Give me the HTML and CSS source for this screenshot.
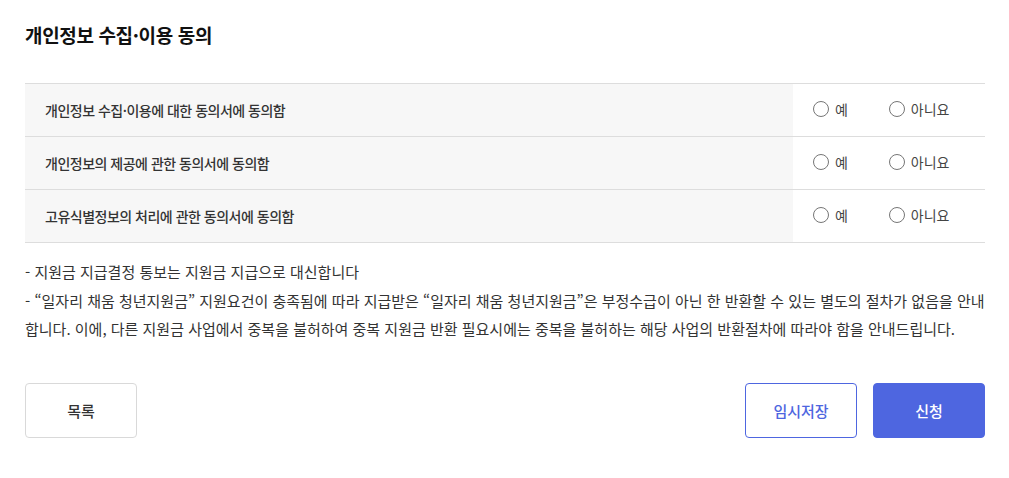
FILE: index.html
```html
<!DOCTYPE html>
<html lang="ko">
<head>
    <meta charset="UTF-8">
    <title>개인정보 수집·이용 동의</title>
    <link rel="stylesheet" href="styles.css">
</head>
<body>
    <div class="wrap">
        <h2 class="title">개인정보 수집·이용 동의</h2>

        <table class="agree">
            <tr>
                <th>개인정보 수집·이용에 대한 동의서에 동의함</th>
                <td>
                    <label class="radio"><input type="radio" name="a1"><span class="dot"></span>예</label>
                    <label class="radio"><input type="radio" name="a1"><span class="dot"></span>아니요</label>
                </td>
            </tr>
            <tr>
                <th>개인정보의 제공에 관한 동의서에 동의함</th>
                <td>
                    <label class="radio"><input type="radio" name="a2"><span class="dot"></span>예</label>
                    <label class="radio"><input type="radio" name="a2"><span class="dot"></span>아니요</label>
                </td>
            </tr>
            <tr>
                <th>고유식별정보의 처리에 관한 동의서에 동의함</th>
                <td>
                    <label class="radio"><input type="radio" name="a3"><span class="dot"></span>예</label>
                    <label class="radio"><input type="radio" name="a3"><span class="dot"></span>아니요</label>
                </td>
            </tr>
        </table>

        <ul class="notes">
            <li>- 지원금 지급결정 통보는 지원금 지급으로 대신합니다</li>
            <li>- “일자리 채움 청년지원금” 지원요건이 충족됨에 따라 지급받은 “일자리 채움 청년지원금”은 부정수급이 아닌 한 반환할 수 있는 별도의 절차가 없음을 안내합니다. 이에, 다른 지원금 사업에서 중복을 불허하여 중복 지원금 반환 필요시에는 중복을 불허하는 해당 사업의 반환절차에 따라야 함을 안내드립니다.</li>
        </ul>

        <div class="btns">
            <button type="button" class="btn">목록</button>
            <div class="right">
                <button type="button" class="btn line">임시저장</button>
                <button type="button" class="btn fill">신청</button>
            </div>
        </div>
    </div>
</body>
</html>
```

FILE: styles.css
```css
/* General Styling */
* {
    box-sizing: border-box;
}

body {
    margin: 0;
    background: #ffffff;
    color: #222222;
    font-family: "Noto Sans CJK KR", "Noto Sans", sans-serif;
}

.wrap {
    width: 960px;
    margin: 0 0 0 25px;
    padding-top: 22px;
}

.title {
    margin: 0 0 35px;
    font-size: 19px;
    font-weight: 700;
    line-height: 26px;
    letter-spacing: -0.35px;
    color: #111111;
}

/* agree table */
.agree {
    width: 100%;
    border-collapse: collapse;
    border-top: 1px solid #dddddd;
}

.agree tr {
    border-bottom: 1px solid #dddddd;
}

.agree th {
    height: 53px;
    padding: 0 20px;
    background: #f7f7f7;
    text-align: left;
    font-size: 14px;
    font-weight: 500;
    color: #333333;
    letter-spacing: -0.5px;
}

.agree td {
    width: 192px;
    padding: 0 0 0 20px;
    font-size: 14px;
    color: #444444;
}

.radio {
    display: inline-flex;
    align-items: center;
    gap: 6px;
    margin-right: 37px;
    cursor: pointer;
}

.radio:last-child {
    margin-right: 0;
}

.radio input {
    display: none;
}

.dot {
    width: 16px;
    height: 16px;
    border: 1px solid #767676;
    border-radius: 50%;
}

/* notes */
.notes {
    list-style: none;
    margin: 15px 0 0;
    padding: 0;
    font-size: 15px;
    line-height: 28.5px;
    color: #333333;
}

/* buttons */
.btns {
    display: flex;
    justify-content: space-between;
    margin-top: 39px;
}

.right {
    display: flex;
    gap: 16px;
}

.btn {
    width: 112px;
    height: 55px;
    border: 1px solid #d9d9d9;
    border-radius: 4px;
    background: #ffffff;
    font-family: inherit;
    font-size: 15px;
    font-weight: 500;
    color: #333333;
    cursor: pointer;
}

.btn.line {
    border-color: #4e66e0;
    color: #4e66e0;
}

.btn.fill {
    border-color: #4e66e0;
    background: #4e66e0;
    color: #ffffff;
}
```
